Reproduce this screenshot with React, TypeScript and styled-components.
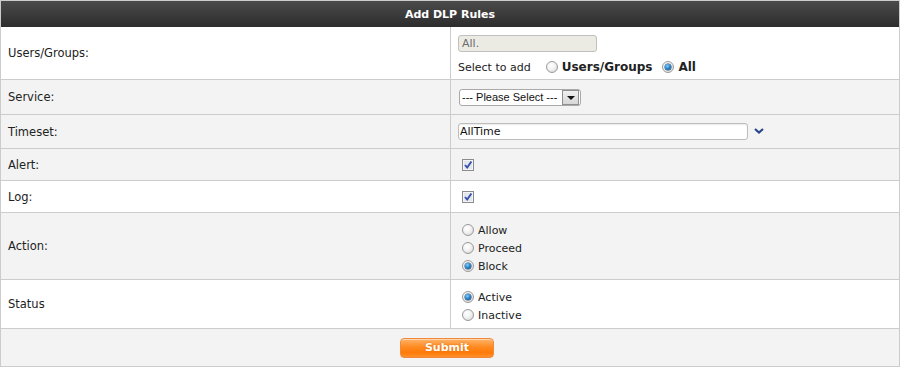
import React from "react";
import styled, { createGlobalStyle } from "styled-components";

const GlobalStyle = createGlobalStyle`
  html, body {
    margin: 0;
    padding: 0;
    background: #ffffff;
  }
  body {
    font-family: "DejaVu Sans", Verdana, sans-serif;
    font-size: 11px;
    color: #222222;
  }
`;

type RowDef = {
  label: string;
  height: number;
  shade: boolean;
  top?: number;
  content: React.ReactNode;
};

const App = () => {
  const rows: RowDef[] = [
    {
      label: "Users/Groups:",
      height: 52,
      shade: false,
      top: 8,
      content: (
        <>
          <DisabledInput>All.</DisabledInput>
          <InlineLine>
            <span>Select to add</span>
            <Radio style={{ marginLeft: 15 }} />
            <BoldLabel>Users/Groups</BoldLabel>
            <Radio checked style={{ marginLeft: 10 }} />
            <BoldLabel>All</BoldLabel>
          </InlineLine>
        </>
      ),
    },
    {
      label: "Service:",
      height: 34,
      shade: true,
      content: (
        <SelectBox>
          <SelectText>--- Please Select ---</SelectText>
          <ArrowBox>
            <Triangle />
          </ArrowBox>
        </SelectBox>
      ),
    },
    {
      label: "Timeset:",
      height: 33,
      shade: true,
      content: (
        <InlineLine>
          <TextInput>AllTime</TextInput>
          <Chevron viewBox="0 0 10 6" width="10" height="6">
            <path d="M1 1 L5 4.5 L9 1" fill="none" stroke="#27468a" strokeWidth="2.2" />
          </Chevron>
        </InlineLine>
      ),
    },
    { label: "Alert:", height: 31, shade: true, content: <Checkbox /> },
    { label: "Log:", height: 31, shade: false, content: <Checkbox /> },
    {
      label: "Action:",
      height: 66,
      shade: true,
      top: 8,
      content: (
        <>
          <OptionLine><Radio /><span>Allow</span></OptionLine>
          <OptionLine><Radio /><span>Proceed</span></OptionLine>
          <OptionLine><Radio checked /><span>Block</span></OptionLine>
        </>
      ),
    },
    {
      label: "Status",
      height: 48,
      shade: false,
      top: 8,
      content: (
        <>
          <OptionLine><Radio checked /><span>Active</span></OptionLine>
          <OptionLine><Radio /><span>Inactive</span></OptionLine>
        </>
      ),
    },
  ];

  return (
    <>
      <GlobalStyle />
      <Panel>
        <Header>Add DLP Rules</Header>
        {rows.map((row) => (
          <Row key={row.label} $height={row.height} $shade={row.shade}>
            <LabelCell>{row.label}</LabelCell>
            <ValueCell $top={row.top}>{row.content}</ValueCell>
          </Row>
        ))}
        <Footer>
          <SubmitButton>Submit</SubmitButton>
        </Footer>
      </Panel>
    </>
  );
};

export default App;

const Radio = ({ checked, style }: { checked?: boolean; style?: React.CSSProperties }) => (
  <RadioDot $checked={!!checked} style={style} />
);

const Checkbox = () => (
  <CheckBoxBox>
    <svg viewBox="0 0 10 10" width="10" height="10">
      <path d="M2 5 L4.2 7.6 L8.4 1.6" fill="none" stroke="#2f4fa8" strokeWidth="1.8" />
    </svg>
  </CheckBoxBox>
);

const Panel = styled.div`
  width: 898px;
  border: 1px solid #cccccc;
  background: #ffffff;
`;

const Header = styled.div`
  height: 26px;
  display: flex;
  align-items: center;
  justify-content: center;
  background: linear-gradient(#4b4b4b, #2c2c2c);
  color: #ffffff;
  font-weight: bold;
  font-size: 11px;
`;

const Row = styled.div<{ $height: number; $shade: boolean }>`
  display: grid;
  grid-template-columns: 450px 1fr;
  height: ${(p) => p.$height}px;
  border-bottom: 1px solid #cccccc;
  background: ${(p) => (p.$shade ? "#f3f3f3" : "#ffffff")};
`;

const LabelCell = styled.div`
  display: flex;
  align-items: center;
  padding-left: 7px;
  border-right: 1px solid #cccccc;
  font-size: 11.5px;
`;

const ValueCell = styled.div<{ $top?: number }>`
  display: flex;
  flex-direction: column;
  justify-content: ${(p) => (p.$top ? "flex-start" : "center")};
  padding-top: ${(p) => p.$top ?? 0}px;
  padding-left: 7px;
`;

const InlineLine = styled.div`
  display: flex;
  align-items: center;
  height: 16px;
  margin-top: 7px;

  &:first-child {
    margin-top: 0;
  }
`;

const OptionLine = styled.div`
  display: flex;
  align-items: center;
  height: 18px;
  gap: 4px;
  padding-left: 4px;
`;

const BoldLabel = styled.span`
  font-weight: bold;
  font-size: 12px;
  margin-left: 4px;
`;

const DisabledInput = styled.div`
  width: 134px;
  height: 15px;
  line-height: 15px;
  padding-left: 3px;
  border: 1px solid #c0c0c0;
  border-radius: 3px;
  background: #ebebe4;
  color: #6d6d6d;
`;

const TextInput = styled.div`
  width: 287px;
  height: 15px;
  line-height: 15px;
  padding-left: 1px;
  border: 1px solid #bdbdbd;
  border-radius: 3px;
  background: #ffffff;
  box-shadow: inset 0 1px 1px rgba(0, 0, 0, 0.08);
  color: #111111;
`;

const Chevron = styled.svg`
  margin-left: 6px;
  margin-top: -2px;
`;

const SelectBox = styled.div`
  display: flex;
  align-items: center;
  width: 120px;
  height: 15px;
  margin-left: 1px;
  border: 1px solid #a9a9a9;
  border-radius: 3px;
  background: #ffffff;
  font-family: "Liberation Sans", Arial, sans-serif;
  font-size: 11px;
  color: #111111;
`;

const SelectText = styled.span`
  flex: 1;
  padding-left: 2px;
  white-space: nowrap;
`;

const ArrowBox = styled.div`
  width: 15px;
  height: 13px;
  margin-right: 1px;
  display: flex;
  align-items: center;
  justify-content: center;
  border: 1px solid #8f8f8f;
  background: linear-gradient(#f0f0f0, #d6d6d6);
`;

const Triangle = styled.span`
  width: 0;
  height: 0;
  border-left: 4px solid transparent;
  border-right: 4px solid transparent;
  border-top: 4px solid #111111;
  margin-top: 1px;
`;

const RadioDot = styled.span<{ $checked: boolean }>`
  position: relative;
  box-sizing: border-box;
  width: 12px;
  height: 12px;
  border-radius: 50%;
  border: 1px solid #9a9a9a;
  background: radial-gradient(circle at 40% 35%, #ffffff 0%, #f2f2f2 45%, #cfcfcf 100%);
  flex-shrink: 0;

  &::after {
    content: "";
    display: ${(p) => (p.$checked ? "block" : "none")};
    position: absolute;
    left: 2px;
    top: 2px;
    width: 6px;
    height: 6px;
    border-radius: 50%;
    background: radial-gradient(circle at 40% 35%, #8fd0ff 0%, #1f7fc8 50%, #0b3f73 100%);
    box-shadow: 0 0 0 0.5px #14406a;
  }
`;

const CheckBoxBox = styled.span`
  box-sizing: border-box;
  width: 12px;
  height: 12px;
  margin-left: 4px;
  display: flex;
  align-items: center;
  justify-content: center;
  border: 1px solid #8c8c8c;
  background: #e4e6ee;
  box-shadow: inset 0 0 0 1px #f4f4f8;
`;

const Footer = styled.div`
  height: 37px;
  display: flex;
  align-items: center;
  justify-content: center;
  background: #f3f3f3;
`;

const SubmitButton = styled.div`
  box-sizing: border-box;
  width: 94px;
  height: 20px;
  margin-left: -6px;
  display: flex;
  align-items: center;
  justify-content: center;
  border: 1px solid #f08a3a;
  border-radius: 4px;
  background: linear-gradient(#ffb46a 0%, #ff8a20 45%, #ff7a08 75%, #ff8f2a 100%);
  box-shadow: inset 0 1px 0 rgba(255, 255, 255, 0.45);
  color: #ffffff;
  font-weight: bold;
  font-size: 11px;
  text-shadow: 0 0 2px #e06800;
`;
